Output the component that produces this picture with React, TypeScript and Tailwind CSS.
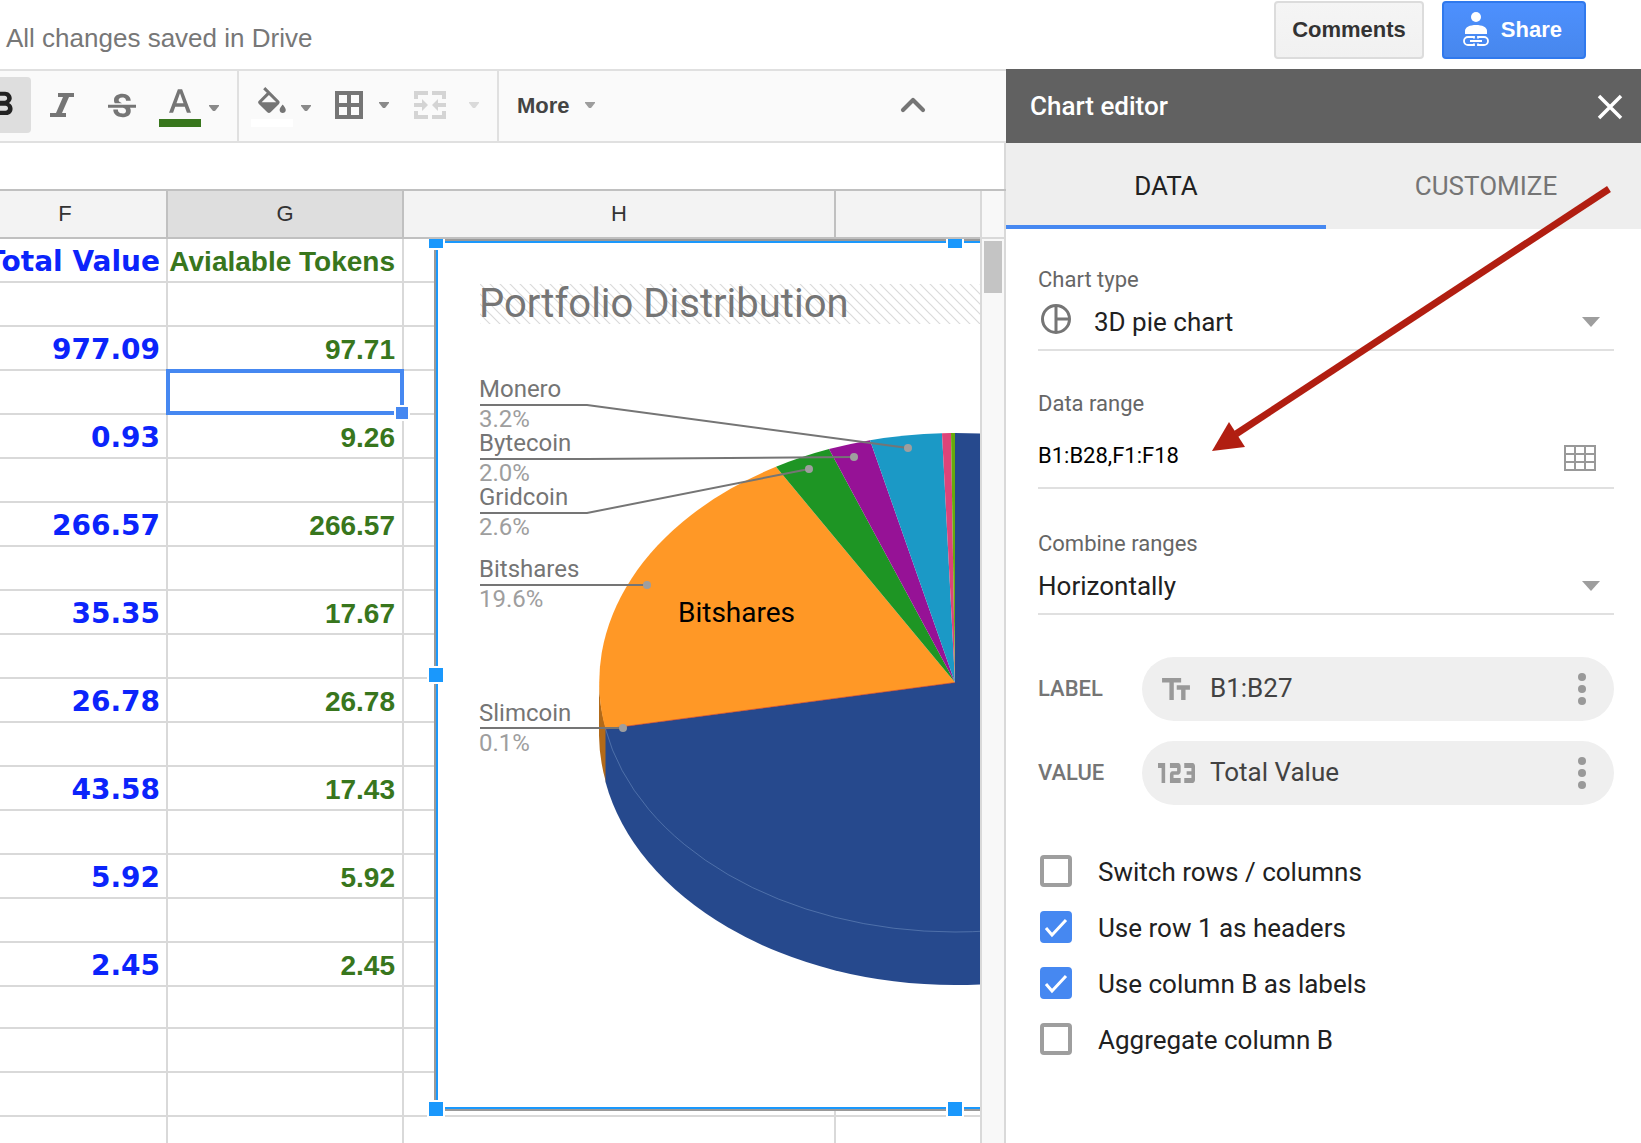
import { type ReactNode } from "react";
import { ChevronUp } from "lucide-react";
import {
  Md123,
  MdFormatBold,
  MdFormatColorFill,
  MdStrikethroughS,
  MdTextFields,
} from "react-icons/md";
import clsx from "clsx";

type Row = { total?: string; tokens?: string; selected?: boolean; short?: boolean };

const rows: Row[] = [
  { total: "Total Value", tokens: "Avialable Tokens" },
  {},
  { total: "977.09", tokens: "97.71" },
  { selected: true },
  { total: "0.93", tokens: "9.26" },
  {},
  { total: "266.57", tokens: "266.57" },
  {},
  { total: "35.35", tokens: "17.67" },
  {},
  { total: "26.78", tokens: "26.78" },
  {},
  { total: "43.58", tokens: "17.43" },
  {},
  { total: "5.92", tokens: "5.92" },
  {},
  { total: "2.45", tokens: "2.45" },
  { short: true },
  {},
  {},
  {},
];

function Caret({ className }: { className?: string }) {
  return (
    <svg viewBox="0 0 10 6" className={clsx("h-[6px] w-[10px]", className)} fill="currentColor">
      <path d="M0 0h10v1L6 6H4L0 1z" opacity="0.85" />
    </svg>
  );
}

function ToolButton({
  label,
  className,
  children,
}: {
  label: string;
  className?: string;
  children: ReactNode;
}) {
  return (
    <button
      type="button"
      aria-label={label}
      className={clsx("mb-[2px] flex h-14 shrink-0 items-center", className)}
    >
      {children}
    </button>
  );
}

function Toolbar() {
  return (
    <div className="flex h-[74px] shrink-0 items-center border-y-2 border-[#e0e0e0] bg-[#fafafa] text-[#757575]">
      <ToolButton label="Bold" className="w-[31px] justify-end rounded-r bg-[#dedede] text-[#222]">
        <MdFormatBold className="mr-2 size-10 shrink-0" />
      </ToolButton>
      <ToolButton label="Italic" className="ml-[19px]">
        <svg viewBox="0 0 24 24" className="size-6" fill="currentColor">
          <path d="M8 0h16v4h-5l-7 16h4v4H0v-4h6l7-16H8z" />
        </svg>
      </ToolButton>
      <ToolButton label="Strikethrough" className="ml-[34px]">
        <MdStrikethroughS viewBox="3 3 18 15" className="h-[25px] w-7" />
      </ToolButton>
      <ToolButton label="Text color" className="ml-[23px] gap-2">
        <span className="flex flex-col items-center gap-[6px] pt-[6px]">
          <svg viewBox="5.49 3 13.02 14" className="h-6 w-[22px]" fill="currentColor">
            <path d="M5.49 17h2.42l1.27-3.58h5.65L16.09 17h2.42L13.25 3h-2.5zM9.91 11.39l2.03-5.79h.12l2.03 5.79z" />
          </svg>
          <span className="h-2 w-[42px] bg-[#38761d]" />
        </span>
        <Caret className="mt-[6px]" />
      </ToolButton>
      <span className="ml-[18px] h-full w-[2px] bg-[#e0e0e0]" />
      <ToolButton label="Fill color" className="ml-3 gap-2">
        <span className="flex flex-col items-center gap-[6px] pt-1">
          <MdFormatColorFill viewBox="3 0 18 17" className="h-[26px] w-7" />
          <span className="h-2 w-[42px] bg-white" />
        </span>
        <Caret className="mt-[6px]" />
      </ToolButton>
      <ToolButton label="Borders" className="ml-6 gap-4">
        <svg viewBox="0 0 28 28" className="size-7" fill="none" stroke="currentColor" strokeWidth="4">
          <path d="M2 2h24v24H2zM14 2v24M2 14h24" />
        </svg>
        <Caret />
      </ToolButton>
      <ToolButton label="Merge cells" className="ml-[25px] gap-[23px] text-[#d4d4d4]">
        <svg viewBox="0 0 32 28" className="h-7 w-8" fill="currentColor">
          <path d="M0 0h14v4H4v4H0zM18 0h14v8h-4V4H18zM0 20h4v4h10v4H0zM28 20h4v8H18v-4h10zM0 12h8V8l6 6-6 6v-4H0zM32 12h-8V8l-6 6 6 6v-4h8z" />
        </svg>
        <Caret />
      </ToolButton>
      <span className="ml-[18px] h-full w-[2px] bg-[#e0e0e0]" />
      <button
        type="button"
        className="mb-[2px] ml-[18px] flex items-center gap-[15px] text-[22px] font-bold text-[#444]"
      >
        More
        <Caret className="text-[#8c8c8c]" />
      </button>
      <ToolButton label="Hide the menus" className="mr-[73px] ml-auto">
        <ChevronUp className="size-10" strokeWidth={2.5} />
      </ToolButton>
    </div>
  );
}

const slices = [
  { color: "#ff9826", d: "M521 443.5L171.5 490A356 249.5 0 0 1 342 227.8z" },
  { color: "#1e9524", d: "M521 443.5L342 227.8A356 249.5 0 0 1 395 210.1z" },
  { color: "#961296", d: "M521 443.5L395 210.1A356 249.5 0 0 1 436 201.2z" },
  { color: "#1b99c6", d: "M521 443.5L436 201.2A356 249.5 0 0 1 508 194.2z" },
  { color: "#dd4479", d: "M521 443.5L508 194.2A356 249.5 0 0 1 517 194z" },
  { color: "#66aa0c", d: "M521 443.5L517 194H521z" },
  {
    color: "#26498d",
    d: "M521 443.5V194A356 249.5 0 0 1 521 693A356 249.5 0 0 1 171.5 490z",
  },
];

const callouts = [
  { name: "Monero", share: "3.2%", y: 166, line: "M46 166H153L474 209", dot: [474, 209] },
  { name: "Bytecoin", share: "2.0%", y: 220, line: "M46 220H153L420 218", dot: [420, 218] },
  { name: "Gridcoin", share: "2.6%", y: 274, line: "M46 274H153L375 230", dot: [375, 230] },
  { name: "Bitshares", share: "19.6%", y: 346, line: "M46 346H213", dot: [213, 346] },
  { name: "Slimcoin", share: "0.1%", y: 490, line: "M46 489H189", dot: [189, 489] },
];

const handles = [
  "-left-[5px] -top-[5px]",
  "left-[514px] -top-[5px]",
  "-left-[5px] top-[429px]",
  "-left-[5px] top-[863px]",
  "left-[514px] top-[863px]",
];

function PieChart() {
  return (
    <div className="absolute top-0 left-[434px] h-[872px] w-[1042px] border-2 border-[#999] bg-white">
      <div className="absolute inset-0 border-2 border-[#1a98fc]" />
      <svg
        viewBox="0 0 1042 872"
        className="absolute -top-[2px] -left-[2px] h-[872px] w-[1042px] font-[Roboto]"
      >
        <defs>
          <pattern id="hatch" width="10" height="10" patternUnits="userSpaceOnUse" x="46" y="45">
            <path d="M-1 -1l12 12M-1 9l2 2M9 -1l2 2" stroke="#dadada" strokeWidth="1.2" />
          </pattern>
        </defs>
        <rect x="46" y="45" width="950" height="40" fill="url(#hatch)" />
        <text x="45" y="78" fontSize="40" fill="#757575">
          Portfolio Distribution
        </text>
        {/* side wall of the disc */}
        <path d="M165 443.5A356 249.5 0 0 0 172 490V543.5A356 249.5 0 0 1 165 496.5z" fill="#b26a19" />
        <path
          d="M171.5 490V543A356 249.5 0 0 0 521 746A356 249.5 0 0 0 877 496.5V443.5z"
          fill="#26498d"
        />
        {slices.map((s) => (
          <path key={s.color} d={s.d} fill={s.color} />
        ))}
        <path d="M171.5 490L521 443.5" stroke="#dc3912" strokeOpacity="0.6" />
        <path
          d="M171.5 490A356 249.5 0 0 0 521 693A356 249.5 0 0 0 877 443.5"
          fill="none"
          stroke="#6f8fc0"
          strokeWidth="0.7"
          strokeOpacity="0.8"
        />
        {callouts.map((c) => (
          <g key={c.name}>
            <text x="45" y={c.y - 8} fontSize="24" fill="#757575">
              {c.name}
            </text>
            <text x="45" y={c.y + 22} fontSize="24" fill="#9e9e9e">
              {c.share}
            </text>
            <path d={c.line} fill="none" stroke="#757575" strokeWidth="2" />
            <circle cx={c.dot[0]} cy={c.dot[1]} r="4" fill="#9e9e9e" />
          </g>
        ))}
        <text x="244" y="383" fontSize="28" fill="#000">
          Bitshares
        </text>
      </svg>
      {handles.map((pos) => (
        <span
          key={pos}
          className={clsx(
            "absolute -mt-[4px] -ml-[4px] box-content size-[14px] border-2 border-white bg-[#1a98fc]",
            pos,
          )}
        />
      ))}
    </div>
  );
}

function Sheet() {
  return (
    <div className="flex min-h-0 flex-1 border-t-2 border-[#c0c0c0]">
      <div className="relative min-w-0 flex-1 overflow-hidden">
        <table className="-ml-9 w-[calc(100%+36px)] table-fixed border-separate border-spacing-0 bg-white">
          <colgroup>
            <col className="w-[204px]" />
            <col className="w-[236px]" />
            <col className="w-[432px]" />
            <col />
          </colgroup>
          <thead>
            <tr className="h-12 bg-[#f3f3f3] text-[22px] text-[#333]">
              <th className="border-r-2 border-b-2 border-[#c0c0c0] p-0 pb-[2px] font-normal">F</th>
              <th className="border-r-2 border-b-2 border-[#c0c0c0] bg-[#dedede] p-0 pb-[2px] font-normal">
                G
              </th>
              <th className="border-r-2 border-b-2 border-[#c0c0c0] p-0 pb-[2px] font-normal">H</th>
              <th className="border-b-2 border-[#c0c0c0]" />
            </tr>
          </thead>
          <tbody>
            {rows.map((row, i) => (
              <tr key={i} className={row.short ? "h-[42px]" : "h-11"}>
                <td className="border-r-2 border-b-2 border-[#d9d9d9] p-0 pt-1 pr-[6px] text-right font-['DejaVu_Sans'] text-[28px] leading-9 font-bold whitespace-nowrap text-[#0b24fb]">
                  {row.total}
                </td>
                <td
                  className={clsx(
                    "border-r-2 border-b-2 border-[#d9d9d9] p-0 pt-1 pr-[7px] text-right text-[28px] leading-9 font-bold whitespace-nowrap text-[#38761d]",
                    row.selected && "relative z-10",
                  )}
                >
                  {row.tokens}
                  {row.selected && (
                    <span className="absolute -inset-[2px] border-4 border-[#4688f1]">
                      <span className="absolute -right-[10px] -bottom-[10px] box-content size-3 border-2 border-white bg-[#4688f1]" />
                    </span>
                  )}
                </td>
                <td className="border-r-2 border-b-2 border-[#d9d9d9]" />
                <td className="border-b-2 border-[#d9d9d9]" />
              </tr>
            ))}
          </tbody>
        </table>
        <div className="absolute inset-x-0 top-12 bottom-0 overflow-hidden">
          <PieChart />
        </div>
      </div>
      <div className="w-[26px] shrink-0 border-x-2 border-[#d9d9d9] bg-[#f8f8f8]">
        <div className="h-12 border-b-2 border-[#d9d9d9]" />
        <div className="mx-[2px] mt-[2px] h-[52px] bg-[#c4c4c4]" />
      </div>
    </div>
  );
}

function PieIcon() {
  return (
    <svg viewBox="0 0 30 30" className="size-[30px]" fill="none" stroke="#757575" strokeWidth="3">
      <circle cx="15" cy="15" r="13.5" />
      <path d="M15 2v26M15 15h13" />
    </svg>
  );
}

function SelectField({
  id,
  label,
  value,
  icon,
}: {
  id: string;
  label: string;
  value: string;
  icon?: ReactNode;
}) {
  return (
    <div className="flex flex-col border-b-2 border-[#e0e0e0]">
      <label htmlFor={id} className="text-[22px] leading-[30px] text-[#666]">
        {label}
      </label>
      <div className="flex h-[54px] items-center">
        {icon && <span className="mr-[23px] ml-[3px] pb-[6px]">{icon}</span>}
        <select
          id={id}
          defaultValue={value}
          className="flex-1 appearance-none bg-transparent text-[26px] leading-8 text-[#212121]"
        >
          <option>{value}</option>
        </select>
        <svg viewBox="0 0 18 10" className="mr-[14px] h-[10px] w-[18px]" fill="#9e9e9e">
          <path d="M0 0h18L9 10z" />
        </svg>
      </div>
    </div>
  );
}

function Pill({ label, value, icon }: { label: string; value: string; icon: ReactNode }) {
  return (
    <div className="flex items-center">
      <span className="w-[104px] pb-[2px] text-[22px] font-medium text-[#757575]">{label}</span>
      <div className="flex h-16 flex-1 items-center rounded-full bg-[#efefef] pr-[28px] pl-[14px]">
        <span className="flex w-10 justify-center text-[#999]">{icon}</span>
        <span className="ml-[14px] flex-1 pb-[2px] text-[26px] text-[#424242]">{value}</span>
        <button type="button" aria-label={`${label} options`}>
          <svg viewBox="0 0 8 32" className="h-8 w-2" fill="#999">
            <circle cx="4" cy="4" r="4" />
            <circle cx="4" cy="16" r="4" />
            <circle cx="4" cy="28" r="4" />
          </svg>
        </button>
      </div>
    </div>
  );
}

function Option({ label, checked }: { label: string; checked?: boolean }) {
  return (
    <label className="flex h-14 items-center gap-[26px] text-[26px] text-[#212121]">
      <span className="relative ml-[2px] size-8">
        <input
          type="checkbox"
          defaultChecked={checked}
          className="block size-8 appearance-none rounded border-4 border-[#9e9e9e] bg-white checked:border-[#4688f1] checked:bg-[#4688f1]"
        />
        {checked && (
          <svg
            viewBox="0 0 32 32"
            className="pointer-events-none absolute inset-0 size-8"
            fill="none"
            stroke="#fff"
            strokeWidth="3"
          >
            <path d="M6 17l6 7L26 9" />
          </svg>
        )}
      </span>
      <span className="pt-[2px]">{label}</span>
    </label>
  );
}

function ChartEditor() {
  return (
    <aside className="flex w-[635px] shrink-0 flex-col bg-white font-[Roboto]">
      <div className="flex h-[74px] shrink-0 items-center justify-between bg-[#616161] pr-[18px] pl-6 text-white">
        <h2 className="text-[26px] font-medium">Chart editor</h2>
        <button type="button" aria-label="Close" className="pt-[2px]">
          <svg viewBox="0 0 26 26" className="size-[26px]" stroke="currentColor" strokeWidth="3.5">
            <path d="M2 2l22 22M24 2L2 24" />
          </svg>
        </button>
      </div>
      <div className="flex h-[86px] shrink-0 overflow-hidden bg-[#eee] text-[26px]">
        <button
          type="button"
          className="w-80 shrink-0 border-b-4 border-[#4688f1] pt-1 text-[#212121]"
        >
          DATA
        </button>
        <button
          type="button"
          className="w-80 shrink-0 border-b-4 border-[#eee] pt-1 text-[#757575]"
        >
          CUSTOMIZE
        </button>
      </div>
      <div className="flex flex-col pt-9 pr-[27px] pl-8">
        <SelectField id="chart-type" label="Chart type" value="3D pie chart" icon={<PieIcon />} />
        <div className="mt-[38px] flex flex-col border-b-2 border-[#e0e0e0]">
          <label htmlFor="data-range" className="text-[22px] leading-[30px] text-[#666]">
            Data range
          </label>
          <div className="flex h-[68px] items-center pt-1">
            <input
              id="data-range"
              defaultValue="B1:B28,F1:F18"
              className="min-w-0 flex-1 bg-transparent text-[22px] text-black outline-none"
            />
            <button type="button" aria-label="Select data range" className="mt-[6px] mr-[18px]">
              <svg viewBox="0 0 32 26" className="h-[26px] w-8" fill="none" stroke="#999" strokeWidth="2">
                <path d="M1 1h30v24H1zM11 1v24M21 1v24M1 9h30M1 17h30" />
              </svg>
            </button>
          </div>
        </div>
        <div className="mt-10">
          <SelectField id="combine" label="Combine ranges" value="Horizontally" />
        </div>
        <div className="mt-[42px] flex flex-col gap-5">
          <Pill
            label="LABEL"
            value="B1:B27"
            icon={<MdTextFields viewBox="2.5 4 19 15" className="h-[22px] w-7" />}
          />
          <Pill
            label="VALUE"
            value="Total Value"
            icon={
              <Md123 viewBox="4 9 15.5 6" preserveAspectRatio="none" className="h-5 w-[37px]" />
            }
          />
        </div>
        <div className="mt-[38px] flex flex-col">
          <Option label="Switch rows / columns" />
          <Option label="Use row 1 as headers" checked />
          <Option label="Use column B as labels" checked />
          <Option label="Aggregate column B" />
        </div>
      </div>
    </aside>
  );
}

export default function App() {
  return (
    <div className="relative flex h-screen flex-col overflow-hidden bg-white font-['Liberation_Sans']">
      <header className="flex h-[69px] shrink-0 items-start pt-px pr-[55px] pl-[6px]">
        <span className="pt-[21px] text-[26px] leading-8 text-[#777]">
          All changes saved in Drive
        </span>
        <button
          type="button"
          className="ml-auto h-[58px] rounded border-2 border-[#dcdcdc] bg-linear-to-b from-[#f5f5f5] to-[#f1f1f1] px-4 pb-[2px] text-[22px] font-bold text-[#333]"
        >
          Comments
        </button>
        <button
          type="button"
          className="ml-[18px] flex h-[58px] items-center gap-3 rounded border-2 border-[#3079ed] bg-linear-to-b from-[#4d90fe] to-[#4787ed] pr-[22px] pb-[2px] pl-[19px] text-[22px] font-bold text-white"
        >
          <svg viewBox="0 0 26 34" className="h-[34px] w-[26px]" fill="currentColor">
            <circle cx="13" cy="5" r="5" />
            <path d="M2 22v-3c0-4 5-6 11-6s11 2 11 6v3z" />
            <path
              d="M11 26.500V25H5a4 4 0 0 0 0 8h6v-1.500M15 26.500V25h6a4 4 0 0 1 0 8h-6v-1.500M7 29h12"
              fill="none"
              stroke="currentColor"
              strokeWidth="1.8"
            />
          </svg>
          Share
        </button>
      </header>
      <div className="flex min-h-0 flex-1">
        <main className="flex min-w-0 flex-1 flex-col">
          <Toolbar />
          <div className="h-[46px] shrink-0 border-r-2 border-[#d9d9d9]" />
          <Sheet />
        </main>
        <ChartEditor />
      </div>
      {/* arrow pointing at the data range */}
      <svg
        viewBox="0 0 398 264"
        className="pointer-events-none absolute top-[187px] right-[31px] h-[264px] w-[398px] overflow-visible"
      >
        <path d="M397 2L24 247" stroke="#b11e11" strokeWidth="7" />
        <path d="M0 264L17 235L33 260z" fill="#b11e11" />
      </svg>
    </div>
  );
}
